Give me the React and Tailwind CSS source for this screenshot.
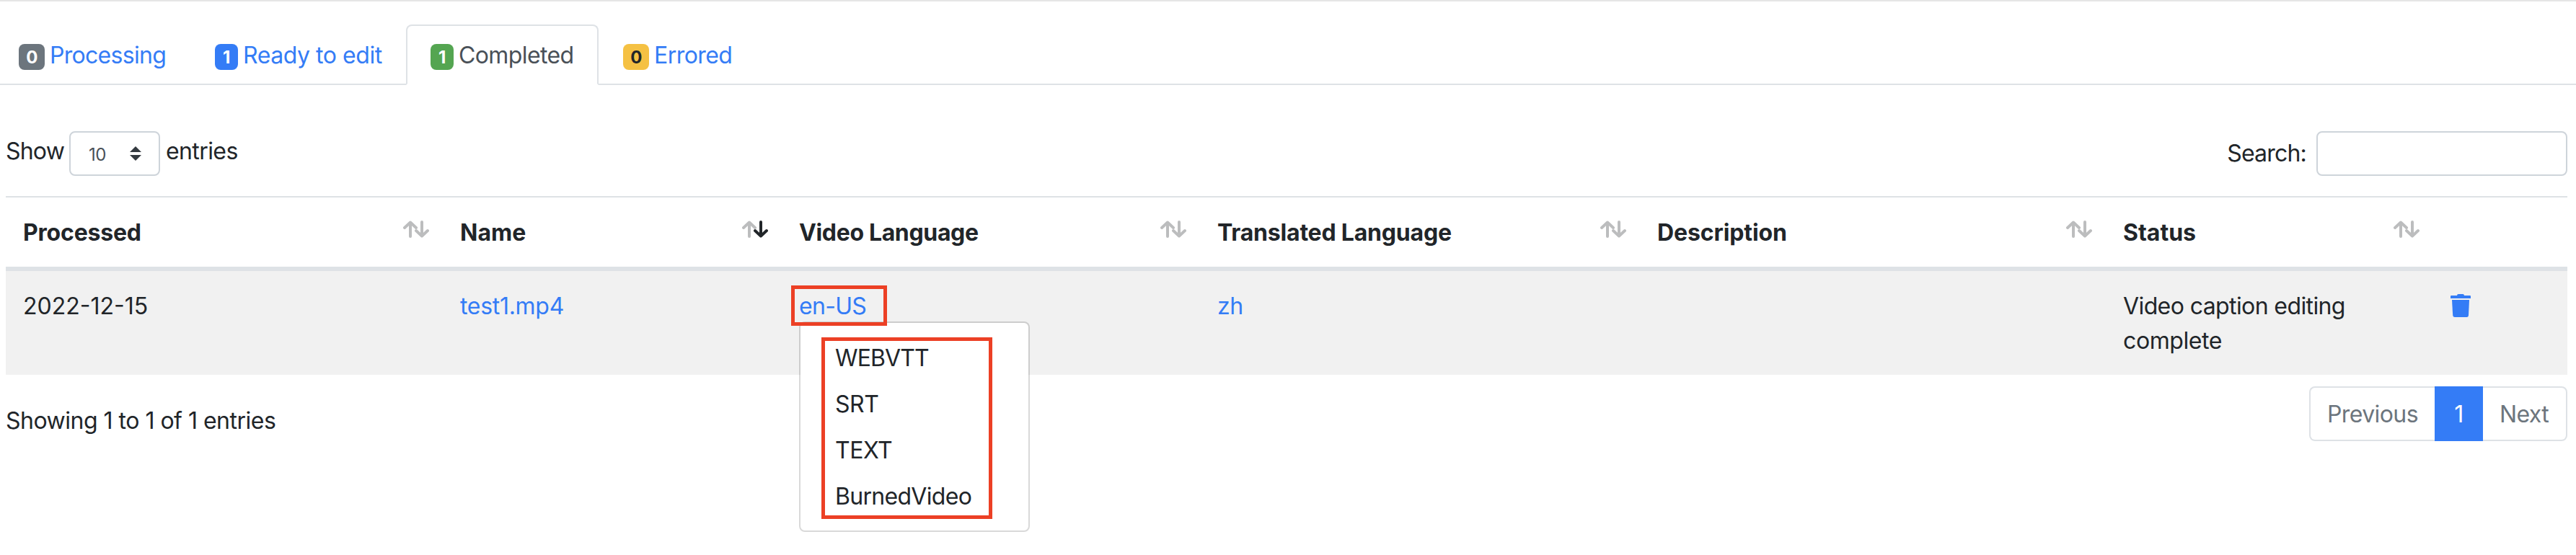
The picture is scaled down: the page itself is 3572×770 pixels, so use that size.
const tabs = [
  { count: 0, label: 'Processing', item: 'w-[263px] pl-[26px]', badge: 'w-9 bg-[#6c757d] text-white', text: 'text-[#347cf6] tracking-[-0.7px]' },
  { count: 1, label: 'Ready to edit', item: 'w-[300px] pl-[35px]', badge: 'w-8 bg-[#347cf6] text-white', text: 'text-[#347cf6] tracking-[-0.45px]' },
  { count: 1, label: 'Completed', active: true, item: 'w-[267px] rounded-t-lg border-2 border-b-white border-[#dee2e6] bg-white pl-8', badge: 'w-8 bg-[#54a551] text-white', text: 'text-[#495057] tracking-[-0.6px]' },
  { count: 0, label: 'Errored', item: 'pl-[34px]', badge: 'w-9 bg-[#f5c143] text-[#212529]', text: 'text-[#347cf6] tracking-[-0.55px]' },
];

const columns = [
  { label: 'Processed', tracking: 'tracking-[-0.2px]' },
  { label: 'Name', tracking: 'tracking-normal', sorted: true },
  { label: 'Video Language', tracking: 'tracking-[-0.35px]' },
  { label: 'Translated Language', tracking: 'tracking-[-0.2px]' },
  { label: 'Description', tracking: 'tracking-[-0.1px]' },
  { label: 'Status', tracking: 'tracking-normal' },
];

const formats = [
  { label: 'WEBVTT', tracking: 'tracking-[-0.9px]' },
  { label: 'SRT', tracking: 'tracking-[-0.5px]' },
  { label: 'TEXT', tracking: 'tracking-[-0.5px]' },
  { label: 'BurnedVideo', tracking: 'tracking-[-0.7px]' },
];

const gridColumns = 'grid grid-cols-[606px_470px_580px_610px_646px_454px_186px]';

function SortIcon({ sorted }) {
  return (
    <svg className="mt-8 mr-[19px] h-6 w-9 shrink-0" viewBox="0 0 36 24" fill="none" strokeWidth="4" strokeLinecap="round" strokeLinejoin="round">
      <path d="M10 22V2.500M2 10L10 2.500L18 10" stroke="#bcbdbe" />
      <path d="M26 2V21.500M18 14L26 21.500L34 14" stroke={sorted ? '#212529' : '#bcbdbe'} />
    </svg>
  );
}

function TrashIcon() {
  return (
    <svg className="mt-[7px] h-8 w-7" viewBox="0 0 28 32" fill="#347cf6">
      <path d="M9 2Q9 0 11 0H17Q19 0 19 2H27Q28 2 28 3V6H0V3Q0 2 1 2Z" />
      <path d="M2 8H26L25 29.500Q24.800 32 22.500 32H6Q3.500 32 3.200 29.500Z" />
    </svg>
  );
}

export default function App() {
  return (
    <div className="h-[770px] w-[3572px] overflow-hidden border-t-2 border-[#e5e5e5] bg-white font-['Inter',sans-serif] text-[32px] leading-[48px] tracking-[-0.5px] text-[#212529]">
      <nav className="mt-8 flex h-[84px] border-b-2 border-[#dee2e6]">
        {tabs.map((t) => (
          <a key={t.label} className={`flex h-[84px] shrink-0 gap-[7px] ${t.item}`}>
            <span className={`flex h-9 items-center justify-center rounded-lg pt-px text-[24px] font-bold leading-none ${t.active ? 'mt-[25px]' : 'mt-[27px]'} ${t.badge}`}>{t.count}</span>
            <span className={`${t.active ? 'pt-[17px]' : 'pt-[19px]'} ${t.text}`}>{t.label}</span>
          </a>
        ))}
      </nav>

      <div className="mr-3 ml-2 flex justify-between pt-16">
        <div className="flex h-[62px]">
          <span className="w-[88px] pt-1 tracking-[-0.8px]">Show</span>
          <div className="flex w-[126px] items-center justify-between rounded-lg border-2 border-[#ced4da] pr-6 pl-[25px] text-[#495057]">
            <span className="pt-[3px] text-[24px] tracking-[-0.4px]">10</span>
            <svg className="h-5 w-4" viewBox="0 0 4 5" fill="#343a40">
              <path d="M2 0L0 2h4zm0 5L0 3h4z" />
            </svg>
          </div>
          <span className="pt-1 pl-2 tracking-[-0.6px]">entries</span>
        </div>
        <div className="flex h-[62px]">
          <span className="pt-[7px] pr-3.5 tracking-[-0.8px]">Search:</span>
          <div className="w-[348px] rounded-lg border-2 border-[#ced4da]" />
        </div>
      </div>

      <div className="mt-7 mr-3 ml-2">
        <div className={`${gridColumns} h-[104px] border-t-2 border-b-[6px] border-[#dee2e6] font-bold`}>
          {columns.map((c) => (
            <div key={c.label} className="flex justify-between pl-6">
              <span className={`pt-[25px] ${c.tracking}`}>{c.label}</span>
              <SortIcon sorted={c.sorted} />
            </div>
          ))}
          <div />
        </div>
        <div className={`${gridColumns} h-36 bg-[#f1f1f1] pt-[25px]`}>
          <div className="pl-6 tracking-normal">2022-12-15</div>
          <div className="pl-6 tracking-[-0.3px] text-[#347cf6]">test1.mp4</div>
          <div className="relative pl-6">
            <span className="tracking-[-0.7px] text-[#347cf6]">en-US</span>
            <div className="absolute top-[45px] left-6 h-[292px] w-80 rounded-lg border-2 border-black/15 bg-white bg-clip-padding pt-[17px]">
              {formats.map((f) => (
                <div key={f.label} className={`py-2 pl-12 ${f.tracking}`}>{f.label}</div>
              ))}
              <div className="absolute top-5 left-[29px] h-[252px] w-[237px] border-[5px] border-[#ec4025]" />
            </div>
            <div className="absolute top-[-5px] left-[13px] h-14 w-[133px] border-[5px] border-[#ec4025]" />
          </div>
          <div className="pl-6 text-[#347cf6]">zh</div>
          <div />
          <div className="pl-6 tracking-[-0.6px]">
            <div>Video caption editing</div>
            <div className="tracking-[-0.4px]">complete</div>
          </div>
          <div className="pl-6">
            <TrashIcon />
          </div>
        </div>
      </div>

      <div className="mr-3 ml-2 flex justify-between">
        <div className="pt-10">Showing 1 to 1 of 1 entries</div>
        <div className="mt-4 flex h-[76px] w-[358px] text-[#6c757d]">
          <div className="w-[174px] rounded-l-lg border-2 border-r-0 border-[#dee2e6] pt-[13px] pl-[23px] tracking-[-0.6px]">Previous</div>
          <div className="w-[67px] bg-[#347cf6] pt-[15px] text-center text-white">1</div>
          <div className="flex-1 rounded-r-lg border-2 border-l-0 border-[#dee2e6] pt-[13px] pl-[23px] tracking-[-0.6px]">Next</div>
        </div>
      </div>
    </div>
  );
}
